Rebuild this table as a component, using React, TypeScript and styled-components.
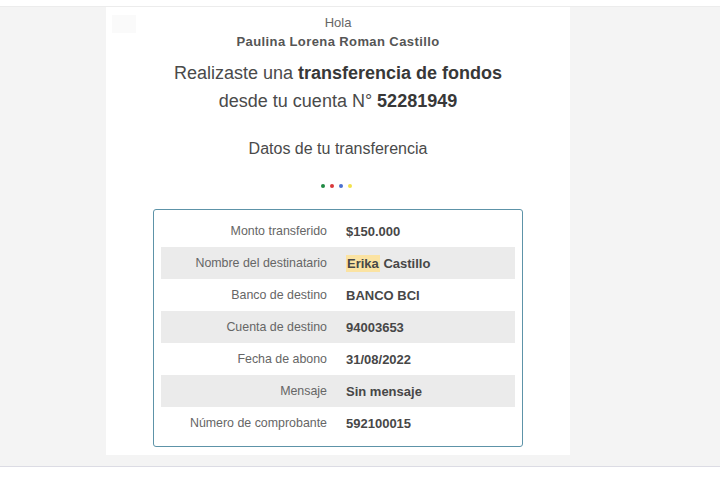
import styled, { createGlobalStyle } from 'styled-components';

const rows = [
  { label: 'Monto transferido', value: '$150.000' },
  { label: 'Nombre del destinatario', value: 'Castillo', mark: 'Erika' },
  { label: 'Banco de destino', value: 'BANCO BCI' },
  { label: 'Cuenta de destino', value: '94003653' },
  { label: 'Fecha de abono', value: '31/08/2022' },
  { label: 'Mensaje', value: 'Sin mensaje' },
  { label: 'Número de comprobante', value: '592100015' },
];

const dots = ['#1f8a43', '#d9383a', '#4a6fd0', '#f3e24a'];

function App() {
  return (
    <>
      <GlobalStyles />
      <TopStrip />
      <Stage>
        <Card>
          <Ghost />
          <Greeting>Hola</Greeting>
          <Name>Paulina Lorena Roman Castillo</Name>
          <Title>
            Realizaste una <b>transferencia de fondos</b>
            <br />
            desde tu cuenta N° <b>52281949</b>
          </Title>
          <Subtitle>Datos de tu transferencia</Subtitle>
          <Dots>
            {dots.map((c) => (
              <Dot key={c} $color={c} />
            ))}
          </Dots>
          <Table>
            {rows.map((row, i) => (
              <Row key={row.label} $striped={i % 2 === 1}>
                <Label>{row.label}</Label>
                <Value>
                  {row.mark && <Mark>{row.mark}</Mark>}
                  {row.mark ? ' ' : ''}
                  {row.value}
                </Value>
              </Row>
            ))}
          </Table>
        </Card>
      </Stage>
    </>
  );
}

const GlobalStyles = createGlobalStyle`
  html, body {
    margin: 0;
    padding: 0;
    background: #ffffff;
    font-family: "Liberation Sans", Arial, sans-serif;
  }
`;

const TopStrip = styled.div`
  height: 6px;
  background: #ffffff;
  border-bottom: 1px solid #ececec;
`;

const Stage = styled.div`
  background: #f4f4f4;
  height: 460px;
  display: flex;
  justify-content: flex-start;
  padding-left: 106px;
  border-bottom: 1px solid #dcdce4;
  box-sizing: border-box;
`;

const Card = styled.div`
  position: relative;
  width: 464px;
  height: 448px;
  background: #ffffff;
  padding-top: 8px;
  box-sizing: border-box;
  display: flex;
  flex-direction: column;
  align-items: center;
`;

const Ghost = styled.div`
  position: absolute;
  left: 6px;
  top: 8px;
  width: 24px;
  height: 18px;
  background: #fafafa;
`;

const Greeting = styled.div`
  font-size: 13px;
  line-height: 16px;
  color: #666666;
`;

const Name = styled.div`
  margin-top: 3px;
  font-size: 13px;
  line-height: 16px;
  font-weight: bold;
  letter-spacing: 0.4px;
  color: #555555;
`;

const Title = styled.div`
  margin-top: 9px;
  font-size: 18px;
  line-height: 28px;
  color: #4a4a4a;
  text-align: center;

  b {
    color: #383838;
  }
`;

const Subtitle = styled.div`
  margin-top: 24px;
  font-size: 16px;
  line-height: 20px;
  color: #4a4a4a;
`;

const Dots = styled.div`
  margin-top: 25px;
  display: flex;
  gap: 5px;
  padding-right: 4px;
`;

const Dot = styled.span<{ $color: string }>`
  width: 4px;
  height: 4px;
  border-radius: 50%;
  background: ${(p) => p.$color};
`;

const Table = styled.div`
  margin-top: 21px;
  width: 370px;
  box-sizing: border-box;
  border: 1px solid #5d93a8;
  border-radius: 3px;
  padding: 5px 7px 7px;
  display: flex;
  flex-direction: column;
`;

const Row = styled.div<{ $striped: boolean }>`
  height: 32px;
  display: grid;
  grid-template-columns: 166px 1fr;
  column-gap: 19px;
  align-items: center;
  background: ${(p) => (p.$striped ? '#ebebeb' : 'transparent')};
  font-size: 12.4px;
`;

const Label = styled.div`
  text-align: right;
  color: #666666;
`;

const Value = styled.div`
  font-weight: bold;
  font-size: 13px;
  color: #474747;
`;

const Mark = styled.span`
  background: #fbe3a2;
  padding: 1px 1px;
`;

export default App;
